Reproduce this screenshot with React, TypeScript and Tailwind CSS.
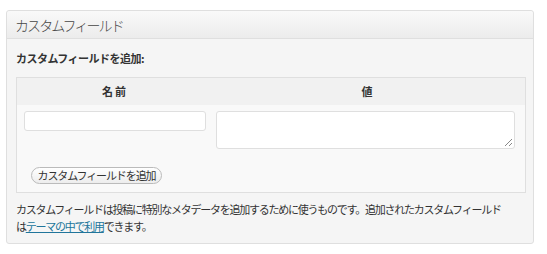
import React from "react";

export default function App() {
  const font = { fontFamily: '"Noto Sans CJK JP", "Noto Sans", sans-serif' };
  return (
    <div className="w-[547px] h-[254px] bg-white pt-[10px] pl-[6px]" style={font}>
      <div className="w-[528px] h-[234px] border border-[#dfdfdf] rounded-[3px] bg-[#f5f5f5] flex flex-col">
        <div className="h-[28px] border-b border-[#dfdfdf] bg-gradient-to-b from-[#f9f9f9] to-[#ececec] rounded-t-[3px] flex items-center pl-[8px]">
          <span className="text-[14px] tracking-[-1.9px] font-light text-[#464646] leading-none">カスタムフィールド</span>
        </div>
        <div className="pl-[9px] pr-[8px]">
          <div className="mt-[11px] h-[16px] leading-[16px] text-[11px] font-bold tracking-[-0.5px] text-[#333]">
            カスタムフィールドを追加:
          </div>
          <div className="mt-[11px] w-[510px] border border-[#dfdfdf] bg-[#f9f9f9]">
            <div className="grid grid-cols-[194px_1fr] h-[27px] bg-[#f1f1f1] items-center text-[11px] font-bold text-[#333]">
              <div className="text-center pl-[2px] tracking-[2px]">名前</div>
              <div className="text-center pr-[2px]">値</div>
            </div>
            <div className="grid grid-cols-[194px_1fr]">
              <div className="pl-[7px] pr-[5px] pt-[6px]">
                <div className="h-[20px] bg-white border border-[#dfdfdf] rounded-[3px]" />
                <div className="mt-[36px] ml-[7px] mb-[8px] w-[131px] h-[17px] rounded-full border border-[#bbbbbb] bg-gradient-to-b from-white to-[#ededed] flex items-center justify-center text-[11px] tracking-[-1.1px] text-[#333] leading-none">
                  カスタムフィールドを追加
                </div>
              </div>
              <div className="pl-[5px] pr-[10px] pt-[6px]">
                <div className="relative h-[38px] bg-white border border-[#dfdfdf] rounded-[3px]">
                  <svg className="absolute right-[1px] bottom-[1px]" width="9" height="9" viewBox="0 0 9 9">
                    <line x1="8" y1="1" x2="1" y2="8" stroke="#888" strokeWidth="1" />
                    <line x1="8" y1="5" x2="5" y2="8" stroke="#888" strokeWidth="1" />
                  </svg>
                </div>
              </div>
            </div>
          </div>
          <p className="mt-[8px] text-[11px] leading-[17px] tracking-[-1.25px] text-[#333]">
            カスタムフィールドは投稿に特別なメタデータを追加するために使うものです。追加されたカスタムフィールド
            <br />
            は<a className="text-[#21759b] underline">テーマの中で利用</a>できます。
          </p>
        </div>
      </div>
    </div>
  );
}
